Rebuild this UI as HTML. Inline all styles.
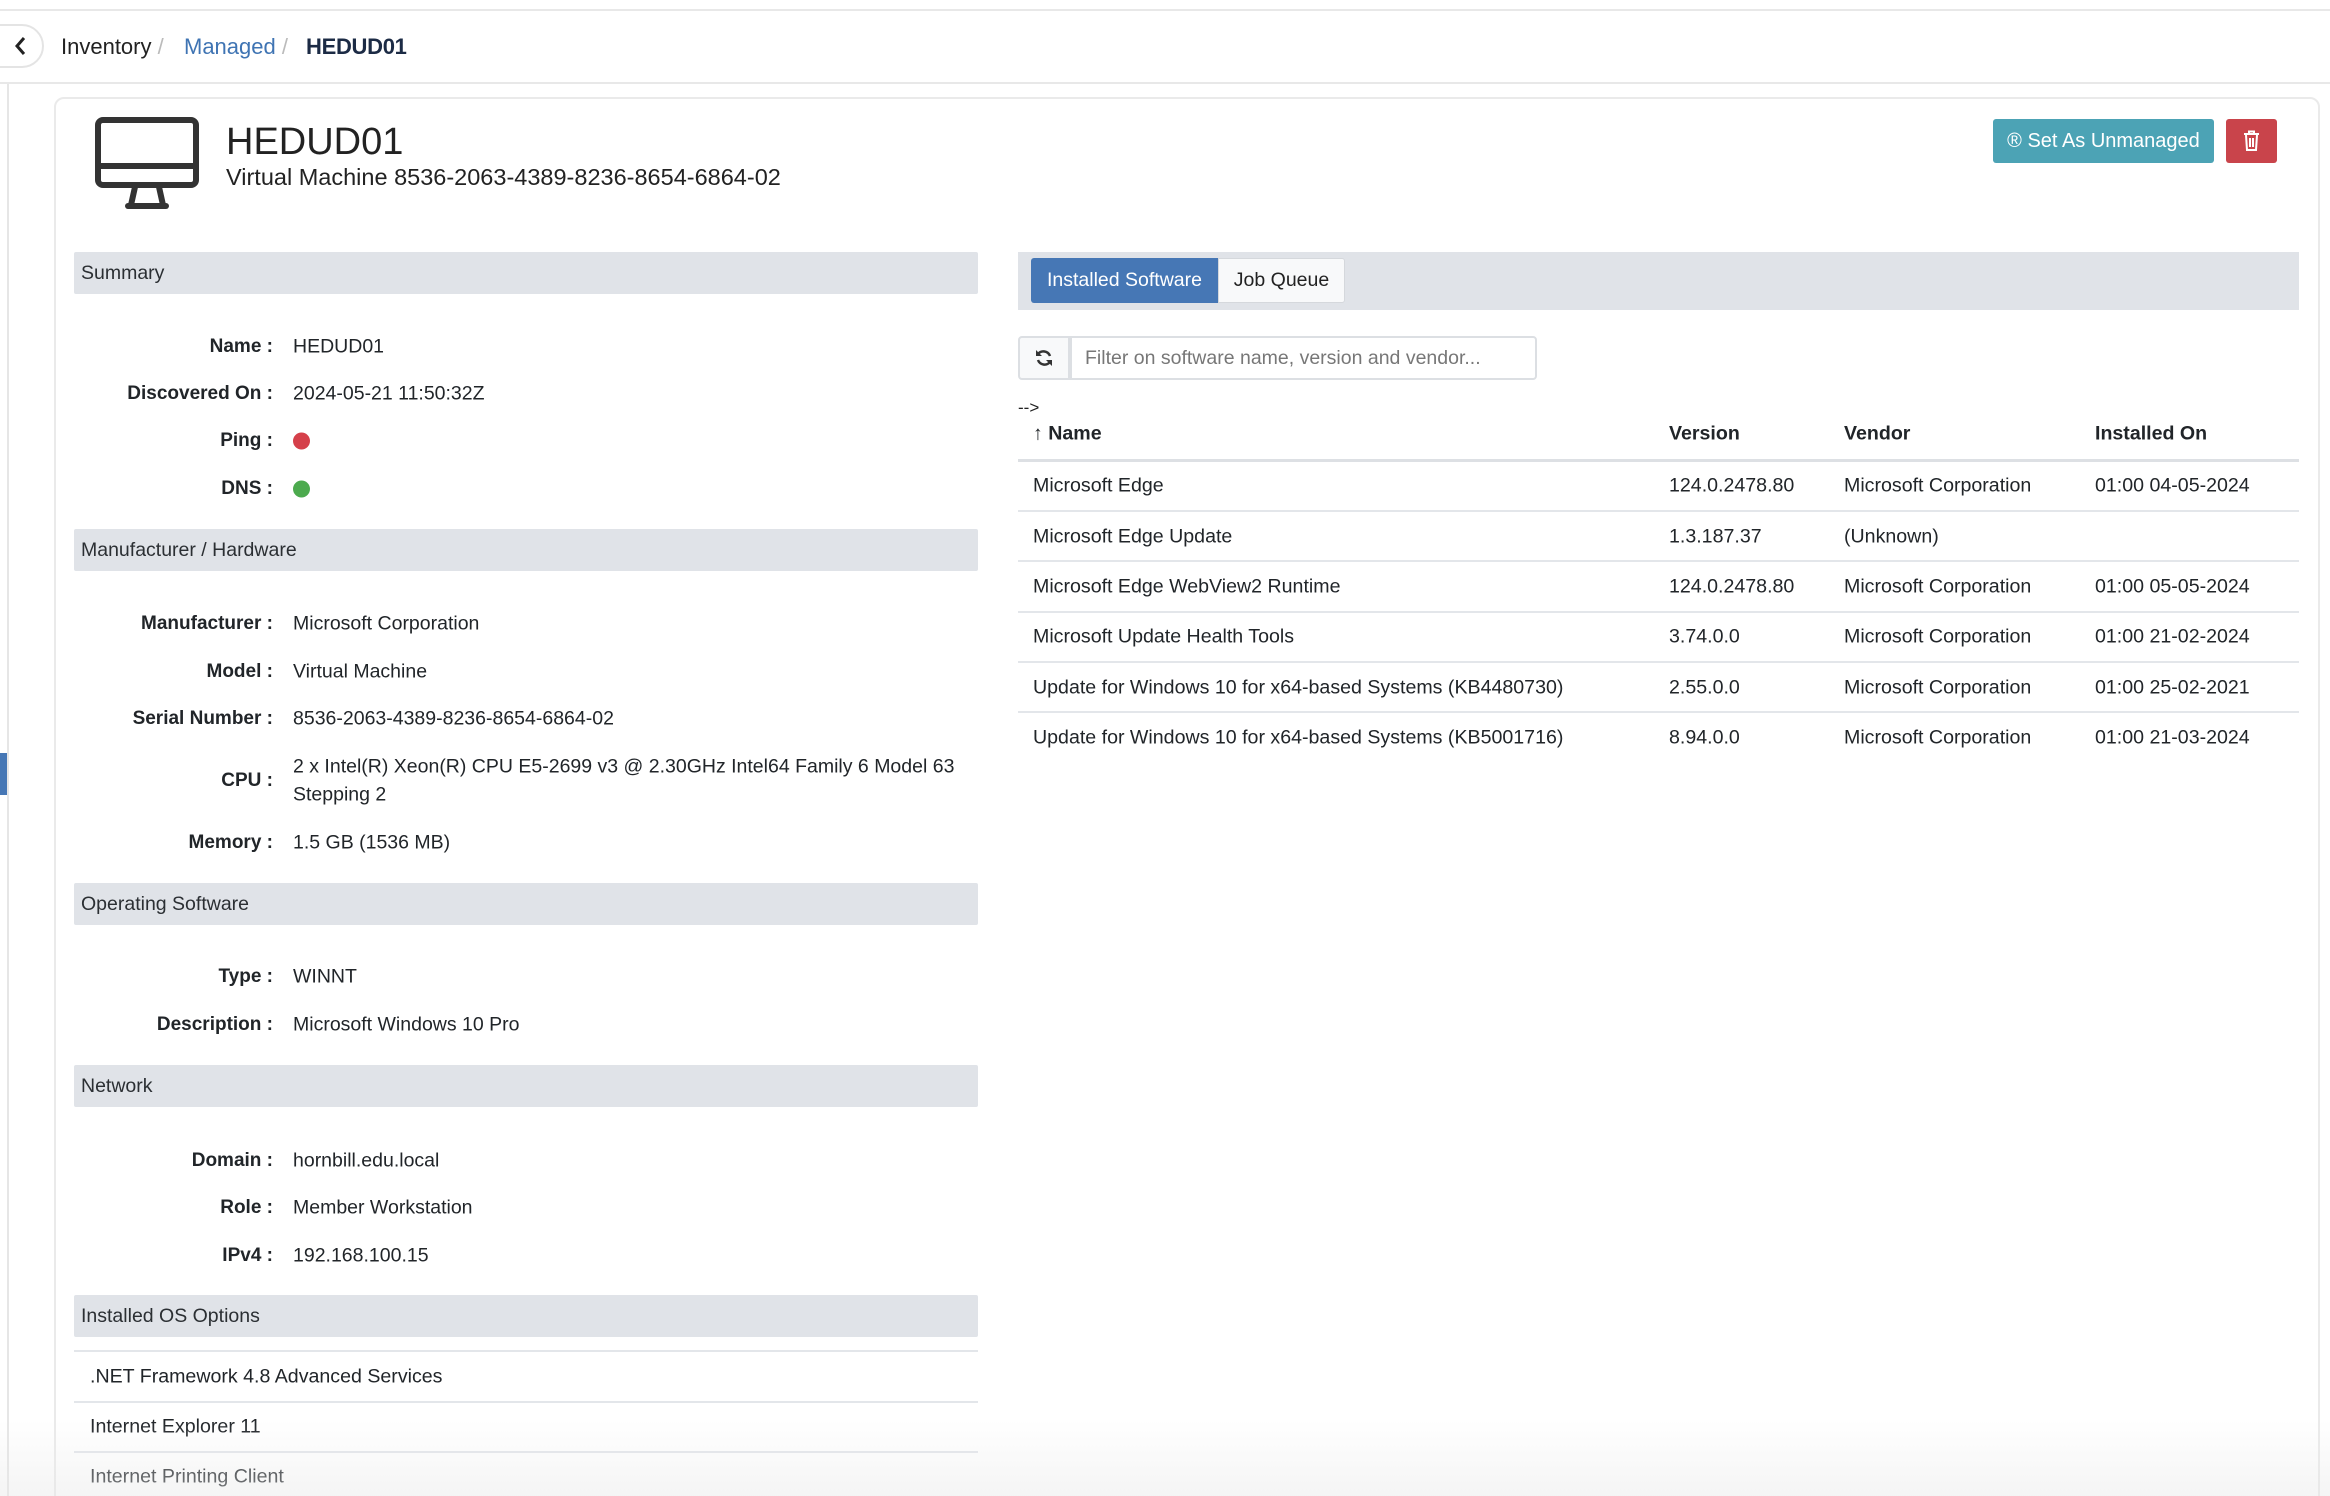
<!DOCTYPE html>
<html><head><meta charset="utf-8"><style>
*{box-sizing:border-box;margin:0;padding:0}
html,body{width:2330px;height:1496px;overflow:hidden}
body{background:#fff;font-family:"Liberation Sans",Arial,sans-serif;color:#212529;position:relative;font-size:19.5px}
.a{position:absolute;white-space:nowrap}
.hdr{position:absolute;left:74px;width:904px;height:42px;background:#e0e3e8;border-radius:2px;font-size:19.5px;line-height:42px;padding-left:7px;color:#2b2f33}
.lbl{position:absolute;right:2057px;font-weight:bold;font-size:19px;transform:translateY(-50%)}
.val{position:absolute;left:293px;font-size:19.5px;transform:translateY(-50%)}
.dot{position:absolute;left:293px;width:17px;height:17px;border-radius:50%;transform:translateY(-50%)}
.hl{position:absolute;height:2px;background:#e3e6ea}
.cell{position:absolute;font-size:19.6px;transform:translateY(-50%);white-space:nowrap}
</style></head><body>
<div class="a" style="left:0;top:9px;width:2330px;height:2px;background:#e8e8e8"></div>
<div class="a" style="left:0;top:82px;width:2330px;height:2px;background:#e8e8e8"></div>
<div class="a" style="left:7px;top:84px;width:2px;height:1412px;background:#e6e6e6"></div>
<div class="a" style="left:0;top:753px;width:7px;height:42px;background:#4677b5"></div>
<div class="a" style="left:-30px;top:24px;width:74px;height:44px;border:2px solid #e4e4e4;border-radius:22px;background:#fff"></div>
<svg class="a" style="left:14px;top:35px" width="14" height="22" viewBox="0 0 14 22"><path d="M10 3 L3 11 L10 19" fill="none" stroke="#222" stroke-width="3"/></svg>
<div class="a" style="left:61px;top:32px;font-size:22px;line-height:30px;color:#222">Inventory <span style="color:#bbb">/</span></div>
<div class="a" style="left:184px;top:32px;font-size:22px;line-height:30px;color:#3f74b3">Managed <span style="color:#bbb">/</span></div>
<div class="a" style="left:306px;top:32px;font-size:22px;line-height:30px;color:#1c2b45;font-weight:bold;letter-spacing:-0.3px">HEDUD01</div>

<div class="a" style="left:54px;top:97px;width:2266px;height:1430px;border:2px solid #eaeaea;border-radius:10px"></div>

<svg class="a" style="left:95px;top:117px" width="104" height="94" viewBox="0 0 104 94"><rect x="3" y="3" width="98" height="65" rx="5" fill="none" stroke="#333" stroke-width="6"/><rect x="3" y="46" width="98" height="6" fill="#333"/><path d="M40 70 L36 88 M64 70 L68 88" stroke="#333" stroke-width="6"/><rect x="30" y="86" width="44" height="6" rx="3" fill="#333"/></svg>
<div class="a" style="left:226px;top:119px;font-size:38px;line-height:46px;color:#222">HEDUD01</div>
<div class="a" style="left:226px;top:163px;font-size:23.5px;line-height:28px;color:#222">Virtual Machine 8536-2063-4389-8236-8654-6864-02</div>

<div class="a" style="left:1993px;top:119px;width:221px;height:44px;background:#4ca3b5;border-radius:3px;color:#fff;font-size:20px;line-height:44px;text-align:center">® Set As Unmanaged</div>
<div class="a" style="left:2226px;top:119px;width:51px;height:44px;background:#c9444b;border-radius:3px"></div>
<svg class="a" style="left:2242px;top:130px" width="19" height="22" viewBox="0 0 19 22"><path d="M2 4 H17 M7 4 V1.5 H12 V4 M4 5 L5 20 H14 L15 5 M8 8 V17 M11 8 V17" fill="none" stroke="#fff" stroke-width="2"/></svg>

<div class="hdr" style="top:252px">Summary</div>
<div class="lbl" style="top:347px">Name :</div><div class="val" style="top:347px">HEDUD01</div>
<div class="lbl" style="top:394px">Discovered On :</div><div class="val" style="top:394px">2024-05-21 11:50:32Z</div>
<div class="lbl" style="top:441px">Ping :</div><div class="dot" style="top:441px;background:#d5404a"></div>
<div class="lbl" style="top:489px">DNS :</div><div class="dot" style="top:489px;background:#4caa4e"></div>

<div class="hdr" style="top:529px">Manufacturer / Hardware</div>
<div class="lbl" style="top:624px">Manufacturer :</div><div class="val" style="top:624px">Microsoft Corporation</div>
<div class="lbl" style="top:672px">Model :</div><div class="val" style="top:672px">Virtual Machine</div>
<div class="lbl" style="top:719px">Serial Number :</div><div class="val" style="top:719px">8536-2063-4389-8236-8654-6864-02</div>
<div class="lbl" style="top:781px">CPU :</div><div class="val" style="top:767px">2 x Intel(R) Xeon(R) CPU E5-2699 v3 @ 2.30GHz Intel64 Family 6 Model 63</div><div class="val" style="top:795px">Stepping 2</div>
<div class="lbl" style="top:843px">Memory :</div><div class="val" style="top:843px">1.5 GB (1536 MB)</div>

<div class="hdr" style="top:883px">Operating Software</div>
<div class="lbl" style="top:977px">Type :</div><div class="val" style="top:977px">WINNT</div>
<div class="lbl" style="top:1025px">Description :</div><div class="val" style="top:1025px">Microsoft Windows 10 Pro</div>

<div class="hdr" style="top:1065px">Network</div>
<div class="lbl" style="top:1161px">Domain :</div><div class="val" style="top:1161px">hornbill.edu.local</div>
<div class="lbl" style="top:1208px">Role :</div><div class="val" style="top:1208px">Member Workstation</div>
<div class="lbl" style="top:1256px">IPv4 :</div><div class="val" style="top:1256px">192.168.100.15</div>

<div class="hdr" style="top:1295px">Installed OS Options</div>
<div class="hl" style="left:74px;width:904px;top:1350px"></div>
<div class="cell" style="left:90px;top:1377px">.NET Framework 4.8 Advanced Services</div>
<div class="hl" style="left:74px;width:904px;top:1401px"></div>
<div class="cell" style="left:90px;top:1427px">Internet Explorer 11</div>
<div class="hl" style="left:74px;width:904px;top:1451px"></div>
<div class="cell" style="left:90px;top:1477px">Internet Printing Client</div>

<div class="a" style="left:1018px;top:252px;width:1281px;height:58px;background:#e0e3e8"></div>
<div class="a" style="left:1031px;top:258px;width:187px;height:45px;background:#4677b5;border-radius:3px 0 0 3px;color:#fff;font-size:19.5px;line-height:45px;text-align:center">Installed Software</div>
<div class="a" style="left:1218px;top:258px;width:127px;height:45px;background:#f8f9fa;border:1px solid #d5d8dc;border-radius:0 3px 3px 0;font-size:19.5px;line-height:43px;text-align:center;color:#222">Job Queue</div>

<div class="a" style="left:1018px;top:336px;width:52px;height:44px;background:#f8f9fa;border:2px solid #dcdfe3;border-radius:4px 0 0 4px"></div>
<svg class="a" style="left:1034px;top:348px" width="20" height="20" viewBox="0 0 20 20"><path d="M16 8 A7 7 0 0 0 4 6 M4 12 A7 7 0 0 0 16 14" fill="none" stroke="#333" stroke-width="2.5"/><path d="M2 2 V8 H8 Z M18 18 V12 H12 Z" fill="#333"/></svg>
<div class="a" style="left:1070px;top:336px;width:467px;height:44px;border:2px solid #dcdfe3;border-radius:0 4px 4px 0;font-size:19.5px;line-height:40px;padding-left:13px;color:#777">Filter on software name, version and vendor...</div>

<div class="a" style="left:1018px;top:398px;font-size:17px;color:#222">--&gt;</div>
<div class="cell" style="left:1033px;top:434px;font-weight:bold">↑ Name</div>
<div class="cell" style="left:1669px;top:434px;font-weight:bold">Version</div>
<div class="cell" style="left:1844px;top:434px;font-weight:bold">Vendor</div>
<div class="cell" style="left:2095px;top:434px;font-weight:bold">Installed On</div>
<div class="hl" style="left:1018px;width:1281px;top:459px;height:3px;background:#dde0e4"></div>

<div class="cell" style="left:1033px;top:486px">Microsoft Edge</div><div class="cell" style="left:1669px;top:486px">124.0.2478.80</div><div class="cell" style="left:1844px;top:486px">Microsoft Corporation</div><div class="cell" style="left:2095px;top:486px">01:00 04-05-2024</div>
<div class="hl" style="left:1018px;width:1281px;top:510px"></div>
<div class="cell" style="left:1033px;top:537px">Microsoft Edge Update</div><div class="cell" style="left:1669px;top:537px">1.3.187.37</div><div class="cell" style="left:1844px;top:537px">(Unknown)</div>
<div class="hl" style="left:1018px;width:1281px;top:560px"></div>
<div class="cell" style="left:1033px;top:587px">Microsoft Edge WebView2 Runtime</div><div class="cell" style="left:1669px;top:587px">124.0.2478.80</div><div class="cell" style="left:1844px;top:587px">Microsoft Corporation</div><div class="cell" style="left:2095px;top:587px">01:00 05-05-2024</div>
<div class="hl" style="left:1018px;width:1281px;top:611px"></div>
<div class="cell" style="left:1033px;top:637px">Microsoft Update Health Tools</div><div class="cell" style="left:1669px;top:637px">3.74.0.0</div><div class="cell" style="left:1844px;top:637px">Microsoft Corporation</div><div class="cell" style="left:2095px;top:637px">01:00 21-02-2024</div>
<div class="hl" style="left:1018px;width:1281px;top:661px"></div>
<div class="cell" style="left:1033px;top:688px">Update for Windows 10 for x64-based Systems (KB4480730)</div><div class="cell" style="left:1669px;top:688px">2.55.0.0</div><div class="cell" style="left:1844px;top:688px">Microsoft Corporation</div><div class="cell" style="left:2095px;top:688px">01:00 25-02-2021</div>
<div class="hl" style="left:1018px;width:1281px;top:711px"></div>
<div class="cell" style="left:1033px;top:738px">Update for Windows 10 for x64-based Systems (KB5001716)</div><div class="cell" style="left:1669px;top:738px">8.94.0.0</div><div class="cell" style="left:1844px;top:738px">Microsoft Corporation</div><div class="cell" style="left:2095px;top:738px">01:00 21-03-2024</div>

<div class="a" style="left:0;top:1420px;width:2330px;height:76px;background:linear-gradient(rgba(240,240,240,0),rgba(232,232,232,0.45))"></div>
</body></html>
